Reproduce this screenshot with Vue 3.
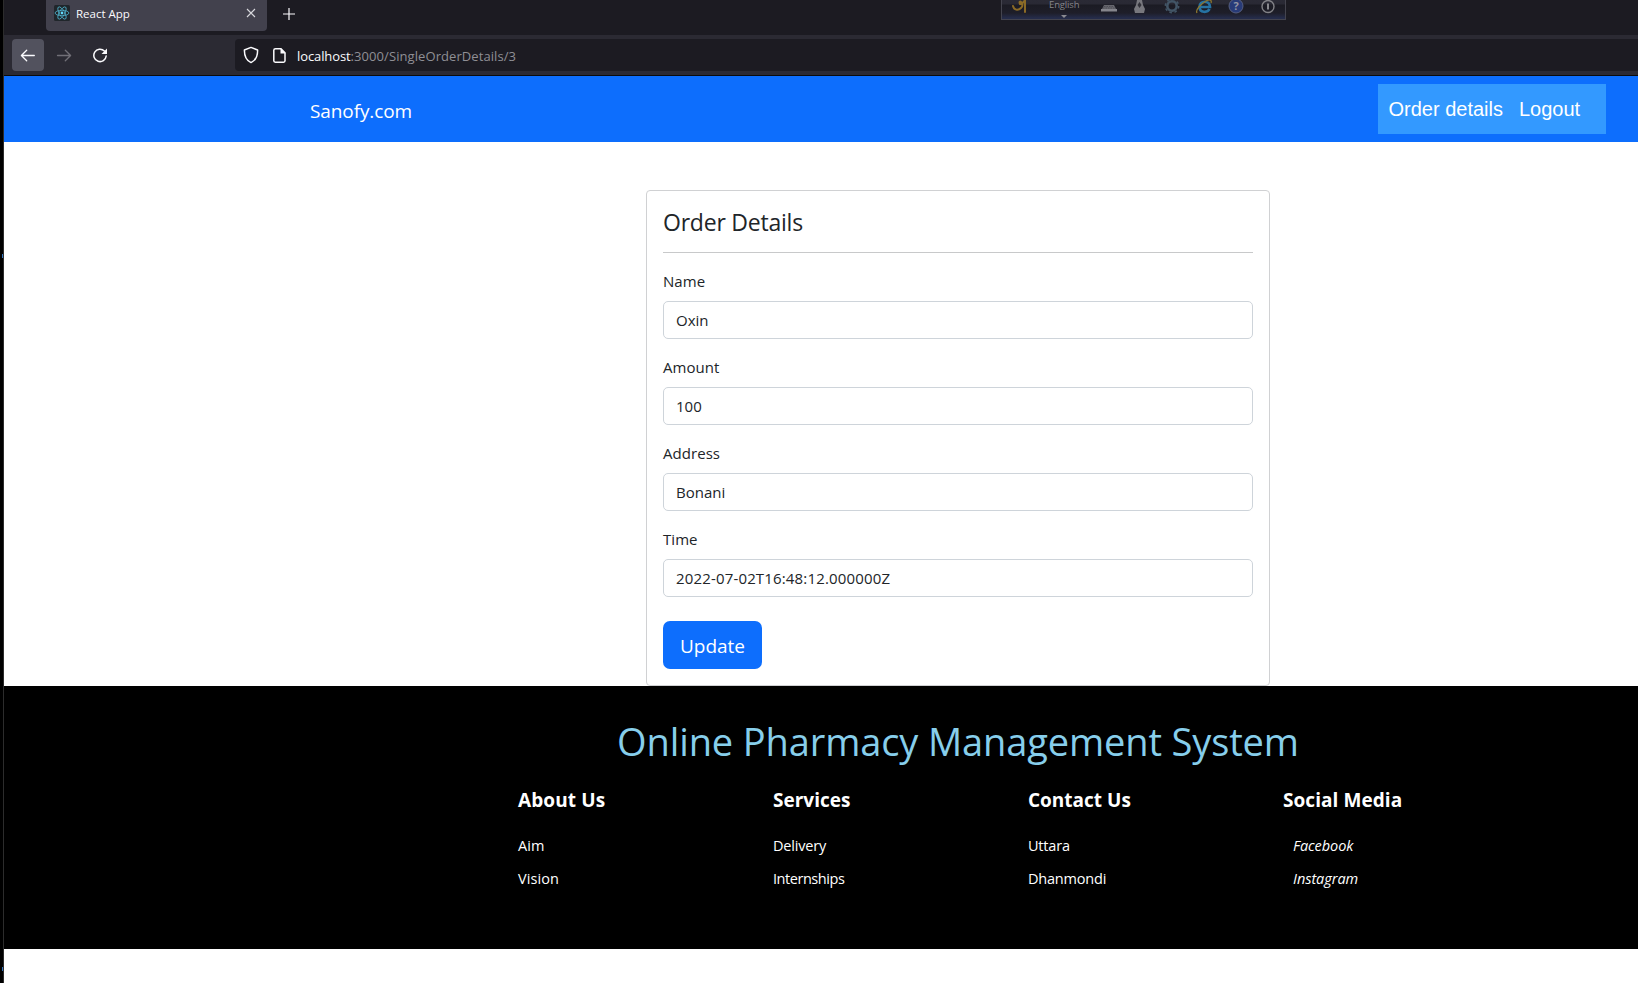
<script setup>
const fields = [
  { label: 'Name', value: 'Oxin', cls: 'name' },
  { label: 'Amount', value: '100', cls: 'amount' },
  { label: 'Address', value: 'Bonani', cls: 'address' },
  { label: 'Time', value: '2022-07-02T16:48:12.000000Z', cls: 'time' },
]
const columns = [
  { title: 'About Us', links: ['Aim', 'Vision'], cls: 'about' },
  { title: 'Services', links: ['Delivery', 'Internships'], cls: 'services' },
  { title: 'Contact Us', links: ['Uttara', 'Dhanmondi'], cls: 'contact' },
  { title: 'Social Media', links: ['Facebook', 'Instagram'], cls: 'social' },
]
</script>

<template>
  <div class="window">
    <div class="edge"><i class="speck"></i><i class="speck low"></i></div>
    <div class="browser">
      <div class="tabs">
        <div class="tab">
          <svg class="favicon" width="16" height="16" viewBox="0 0 16 16">
            <rect width="16" height="16" rx="1.5" fill="#20262b" />
            <g fill="none" stroke="#4fb3cc" stroke-width="0.8">
              <ellipse cx="8" cy="8" rx="6.9" ry="2.7" />
              <ellipse cx="8" cy="8" rx="6.9" ry="2.7" transform="rotate(60 8 8)" />
              <ellipse cx="8" cy="8" rx="6.9" ry="2.7" transform="rotate(120 8 8)" />
            </g>
            <circle cx="8" cy="8" r="1.4" fill="#61dafb" />
          </svg>
          <span class="tab-title">React App</span>
          <svg class="close" width="10" height="10" viewBox="0 0 10 10" stroke="#d8d8dd" stroke-width="1.1" fill="none"><path d="M1 1l8 8M9 1l-8 8" /></svg>
        </div>
        <svg class="plus" width="14" height="14" viewBox="0 0 14 14" stroke="#fbfbfe" stroke-width="1.2" fill="none"><path d="M7 1v12M1 7h12" /></svg>
        <div class="widget">
          <svg width="285" height="20" viewBox="0 0 285 20">
            <g fill="none" stroke="#8a6a26" stroke-width="2" stroke-linecap="round" stroke-linejoin="round">
              <path d="M11 6c1 4 5 5 8 2 2-2 2-5 0-6-1-1-2 0-1 2M19 4c2-1 3-2 4-4v12" />
            </g>
            <path d="M59 15h6l-3 3z" fill="#8b8b92" />
            <path d="M102 5h10l2 4h-14z" fill="#66666d" /><path d="M99 9h16v2.500h-16z" fill="#85858c" />
            <path d="M102 6.500h10M101 8h12" stroke="#45454d" stroke-width=".7" stroke-dasharray="1.500 1" />
            <path d="M135 0h5l1 5 2 4-1 4h-9l-1-4 2-4z" fill="#77777d" /><path d="M137.500 2l2 3-2 3-2-3z" fill="#313139" />
            <circle cx="170" cy="6" r="4.700" fill="none" stroke="#425566" stroke-width="2.600" />
            <circle cx="170" cy="6" r="6.700" fill="none" stroke="#425566" stroke-width="1.500" stroke-dasharray="2.600 2.660" />
            <path d="M198 7h10c0-7-10.500-7-10.500 0 0 6 8 6 10 2" fill="none" stroke="#2673a3" stroke-width="2.700" />
            <path d="M195 13c-2-3 4-9 9-12 4-2 6-1 5 2" fill="none" stroke="#8b7630" stroke-width="1.300" />
            <circle cx="234" cy="6" r="7" fill="#283b78" stroke="#555e80" />
            <circle cx="266" cy="6.500" r="6" fill="none" stroke="#828287" stroke-width="1.400" />
            <path d="M266 3.500v6" stroke="#96969b" stroke-width="1.800" />
          </svg>
          <span class="question">?</span>
          <span class="language">English</span>
        </div>
      </div>
      <div class="toolbar">
        <button class="back" aria-label="Back">
          <svg width="16" height="14" viewBox="0 0 16 14" fill="none" stroke="#fbfbfe" stroke-width="1.3" stroke-linecap="round" stroke-linejoin="round"><path d="M14.300 7.500H1.500M6.700 2.200L1.400 7.500l5.300 5.300" /></svg>
        </button>
        <svg class="forward" width="16" height="14" viewBox="0 0 16 14" fill="none" stroke="#716f77" stroke-width="1.3" stroke-linecap="round" stroke-linejoin="round"><path d="M1.500 7.500h13M9.300 2.200l5.300 5.300-5.300 5.300" /></svg>
        <svg class="reload" width="16" height="16" viewBox="0 0 16 16"><path d="M12.400 4A6.200 6.200 0 1 0 14.200 9" fill="none" stroke="#fbfbfe" stroke-width="1.5" stroke-linecap="round" /><path d="M15 1.500V7H9.500z" fill="#fbfbfe" /></svg>
        <div class="address-bar">
          <svg width="16" height="18" viewBox="0 0 16 18" fill="none" stroke="#fbfbfe" stroke-width="1.5" stroke-linejoin="round"><path d="M8 1.400l6.600 2.600c.1 6-1.800 10.300-6.600 12.600C3.200 14.300 1.300 10 1.400 4z" /></svg>
          <svg class="doc" width="13" height="15" viewBox="0 0 13 15"><path d="M2.500 .8H8l4 4v8c0 .9-.6 1.400-1.400 1.400H2.300c-.9 0-1.500-.5-1.500-1.400V2.300C.8 1.400 1.500.8 2.500.8z" fill="none" stroke="#fbfbfe" stroke-width="1.5" /><path d="M7.500 .6v4.900h5z" fill="#fbfbfe" /></svg>
          <span class="url"><b>localhost</b>:3000/SingleOrderDetails/3</span>
        </div>
      </div>

      <header class="navbar">
        <a class="brand">Sanofy.com</a>
        <nav class="menu"><a>Order details</a><a>Logout</a></nav>
      </header>

      <main>
        <section class="card">
          <h1>Order Details</h1>
          <div v-for="f in fields" :key="f.label" class="field" :class="f.cls">
            <label>{{ f.label }}</label>
            <div class="control"><span>{{ f.value }}</span></div>
          </div>
          <button class="update">Update</button>
        </section>
      </main>

      <footer>
        <h2>Online Pharmacy Management System</h2>
        <div class="columns">
          <div v-for="c in columns" :key="c.title" class="column" :class="c.cls">
            <h3>{{ c.title }}</h3>
            <a v-for="l in c.links" :key="l">{{ l }}</a>
          </div>
        </div>
      </footer>
    </div>
  </div>
</template>

<style>
html, body { margin: 0; background: #fff; overflow: hidden; }
</style>

<style scoped>
* { box-sizing: border-box; }
.window { display: flex; width: 1638px; height: 983px; overflow: hidden; font-family: "Open Sans", "Noto Sans", sans-serif; color: #212529; white-space: nowrap; }
.edge { position: relative; width: 4px; background: #000; border-right: 1px solid #2c2c2c; flex: none; }
.speck { position: absolute; left: 2px; top: 254px; width: 1px; height: 4px; background: #3274bd; }
.speck.low { top: 967px; }
.browser { flex: 1; min-width: 0; display: flex; flex-direction: column; }
.tabs { position: relative; height: 35px; background: #1c1b22; display: flex; align-items: flex-start; padding-left: 42px; flex: none; }
.tab { width: 221px; height: 31px; background: #42414d; border-radius: 0 0 4px 4px; display: flex; align-items: flex-start; padding: 5px 11px 0 8px; }
.tab-title { margin-left: 6px; font-size: 11.5px; line-height: 18px; color: #fbfbfe; }
.close { margin: 3px 0 0 auto; }
.plus { margin: 7px 0 0 15px; }
.widget { position: absolute; left: 997px; top: 0; width: 285px; height: 20px; background: linear-gradient(#2a2a35 0, #292934 4px, #1b1b23 5px, #1e1e29 13px, #252c4a 18px); border: solid #44444e; border-width: 0 1px 1px; }
.widget svg { display: block; }
.question { position: absolute; left: 228px; top: 0; width: 12px; text-align: center; font-weight: 700; font-size: 11px; line-height: 12px; color: #9294a3; }
.language { position: absolute; left: 47px; top: 0; font-size: 9.5px; line-height: 10px; color: #85858b; letter-spacing: -0.15px; }
.toolbar { height: 41px; background: #2b2a33; border-bottom: 1px solid #0c0c0d; display: flex; align-items: center; padding-left: 8px; flex: none; }
.back { width: 32px; height: 32px; padding: 0; border: 0; border-radius: 4px; background: #52525e; display: grid; place-items: center; }
.forward { margin-left: 12px; }
.reload { margin-left: 20px; }
.address-bar { flex: 1; height: 32px; margin-left: 127px; background: #1c1b22; border-radius: 4px 0 0 4px; display: flex; align-items: center; padding-left: 8px; }
.doc { margin-left: 14px; }
.url { margin-left: 11px; font-size: 13px; line-height: 20px; color: #8f8f95; letter-spacing: 0.08px; padding-top: 1px; }
.url b { font-weight: 400; color: #fbfbfe; letter-spacing: -0.1px; }
.navbar { height: 66px; background: #0d6efd; display: flex; align-items: center; justify-content: space-between; padding: 0 32px 0 306px; flex: none; }
.brand { font-size: 19px; line-height: 30px; color: #fff; padding-top: 3px; letter-spacing: -0.1px; }
.menu { width: 228px; height: 50px; background: #39f; display: flex; gap: 16px; padding: 0 10.5px; font: 20px/50px "Liberation Sans", Arial, sans-serif; color: #fff; }
main { height: 544px; padding: 48px 0 0 642px; flex: none; }
.card { width: 624px; height: 496px; border: 1px solid #d0d1d3; border-radius: 4px; padding: 16px; }
h1 { margin: 0 0 15px; height: 46px; border-bottom: 1px solid #c8c9ca; font-size: 23px; font-weight: 400; line-height: 30px; letter-spacing: -0.22px; }
.field { margin-bottom: 16px; }
.field label { display: block; height: 25px; line-height: 26px; font-size: 15px; margin-bottom: 8px; letter-spacing: 0.05px; }
.control { height: 38px; border: 1px solid #ced4da; border-radius: 5px; padding: 0 12px; font-size: 15px; line-height: 37px; }
.field + .field { margin-top: -1px; }
.time .control { letter-spacing: 0.16px; }
.update { display: block; margin-top: 24px; width: 99px; height: 48px; padding: 2px 0 0; border: 0; border-radius: 7px; background: #0d6efd; color: #fff; font: 19px/46px "Open Sans", "Noto Sans", sans-serif; }
footer { height: 263px; background: #000; padding: 32px 0 0 514px; color: #fff; flex: none; }
h2 { width: 880px; margin: 0; height: 69px; text-align: center; color: #87ceeb; font-size: 38px; line-height: 46px; font-weight: 400; letter-spacing: -0.12px; }
.columns { display: grid; grid-template-columns: repeat(4, 255px); }
h3 { margin: 0 0 16px; font-size: 19px; line-height: 26px; font-weight: 700; }
.about h3 { letter-spacing: 0.12px; }
.social h3 { letter-spacing: 0.06px; }
.column a { display: block; height: 33px; line-height: 33px; font-size: 14.5px; letter-spacing: -0.2px; }
.about a { letter-spacing: 0.1px; }
.services a:last-child { letter-spacing: -0.45px; }
.social a { font-style: italic; padding-left: 10px; letter-spacing: -0.05px; }
</style>
